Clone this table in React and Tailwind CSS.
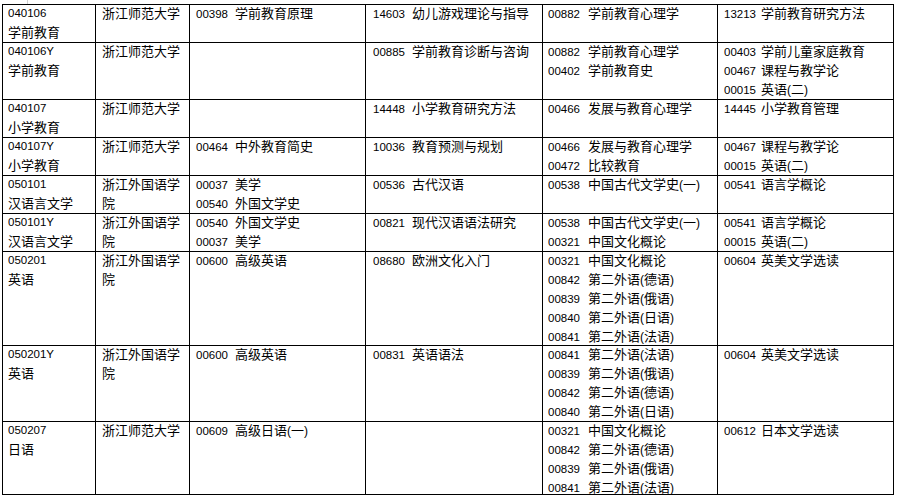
import React from "react";

const widths = ["w-[93px]", "w-[94px]", "w-[176px]", "w-[177px]", "w-[175px]", "w-[176px]"];
const pads = ["pl-[5px]", "pl-[6px]", "pl-[6px]", "pl-[7px]", "pl-[5px]", "pl-[6px]"];
const gaps = ["", "", "mr-[7px]", "mr-[7px]", "mr-[8px]", "mr-[5px]"];

const rows = [
  { h: "h-[38px]", cells: [["040106", "学前教育"], ["浙江师范大学"], ["00398 学前教育原理"], ["14603 幼儿游戏理论与指导"], ["00882 学前教育心理学"], ["13213 学前教育研究方法"]] },
  { h: "h-[57px]", cells: [["040106Y", "学前教育"], ["浙江师范大学"], [], ["00885 学前教育诊断与咨询"], ["00882 学前教育心理学", "00402 学前教育史"], ["00403 学前儿童家庭教育", "00467 课程与教学论", "00015 英语(二)"]] },
  { h: "h-[38px]", cells: [["040107", "小学教育"], ["浙江师范大学"], [], ["14448 小学教育研究方法"], ["00466 发展与教育心理学"], ["14445 小学教育管理"]] },
  { h: "h-[38px]", cells: [["040107Y", "小学教育"], ["浙江师范大学"], ["00464 中外教育简史"], ["10036 教育预测与规划"], ["00466 发展与教育心理学", "00472 比较教育"], ["00467 课程与教学论", "00015 英语(二)"]] },
  { h: "h-[38px]", cells: [["050101", "汉语言文学"], ["浙江外国语学", "院"], ["00037 美学", "00540 外国文学史"], ["00536 古代汉语"], ["00538 中国古代文学史(一)"], ["00541 语言学概论"]] },
  { h: "h-[38px]", cells: [["050101Y", "汉语言文学"], ["浙江外国语学", "院"], ["00540 外国文学史", "00037 美学"], ["00821 现代汉语语法研究"], ["00538 中国古代文学史(一)", "00321 中国文化概论"], ["00541 语言学概论", "00015 英语(二)"]] },
  { h: "h-[94px]", cells: [["050201", "英语"], ["浙江外国语学", "院"], ["00600 高级英语"], ["08680 欧洲文化入门"], ["00321 中国文化概论", "00842 第二外语(德语)", "00839 第二外语(俄语)", "00840 第二外语(日语)", "00841 第二外语(法语)"], ["00604 英美文学选读"]] },
  { h: "h-[76px]", cells: [["050201Y", "英语"], ["浙江外国语学", "院"], ["00600 高级英语"], ["00831 英语语法"], ["00841 第二外语(法语)", "00839 第二外语(俄语)", "00842 第二外语(德语)", "00840 第二外语(日语)"], ["00604 英美文学选读"]] },
  { h: "h-[73px]", cells: [["050207", "日语"], ["浙江师范大学"], ["00609 高级日语(一)"], [], ["00321 中国文化概论", "00842 第二外语(德语)", "00839 第二外语(俄语)", "00841 第二外语(法语)"], ["00612 日本文学选读"]] },
];

function renderName(s) {
  return s.split(/([()])/).map((p, i) =>
    p === "(" || p === ")" ? (
      <span key={i} className="text-[12px] leading-[19px]">{p}</span>
    ) : (
      <span key={i} className="leading-[19px]">{p}</span>
    )
  );
}

function Line({ text, col }) {
  const m = text.match(/^(\d{5}) (.*)$/);
  const base = "h-[19px] leading-[19px] whitespace-nowrap";
  if (m) {
    return (
      <div className={base}>
        <span className={`text-[11.5px] leading-[19px] ${gaps[col]}`}>{m[1]}</span>
        {renderName(m[2])}
      </div>
    );
  }
  if (/^[0-9Y]+$/.test(text)) {
    return <div className={`${base} text-[11.5px]`}>{text}</div>;
  }
  return <div className={base}>{renderName(text)}</div>;
}

export default function App() {
  return (
    <div className="w-[900px] h-[500px] bg-white text-black overflow-hidden relative">
      <div className="absolute left-[27px] top-0 w-px h-[4px] bg-[#d0d0d0]" />
      <div className="pt-[4px] pl-[2px]">
        <div
          className="w-[892px] border-l border-t border-black text-[13px] leading-[19px]"
          style={{ fontFamily: '"Liberation Sans", "Noto Sans CJK SC", sans-serif' }}
        >
          {rows.map((r, ri) => (
            <div key={ri} className={`flex ${r.h} border-b border-black`}>
              {r.cells.map((c, ci) => (
                <div key={ci} className={`${widths[ci]} ${pads[ci]} border-r border-black shrink-0`}>
                  <div className="-mt-px">
                    {c.map((t, ti) => (
                      <Line key={ti} text={t} col={ci} />
                    ))}
                  </div>
                </div>
              ))}
            </div>
          ))}
        </div>
      </div>
    </div>
  );
}
